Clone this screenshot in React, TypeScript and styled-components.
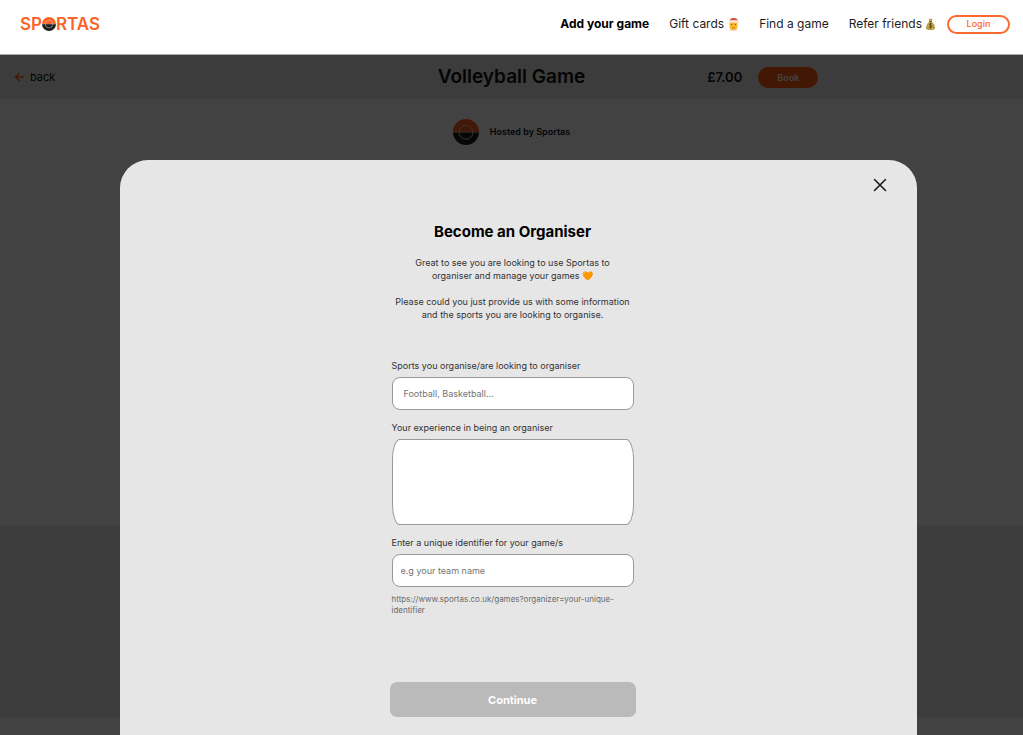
import React from "react";
import styled, { createGlobalStyle } from "styled-components";

const GlobalStyle = createGlobalStyle`
  *, *::before, *::after { box-sizing: border-box; }
  body { margin: 0; background: #fff; color: #111; font-family: Inter, "Liberation Sans", sans-serif; }
  button, input, textarea { font-family: inherit; }
  h1, h2, p { margin: 0; }
`;

const Page = styled.div`
  display: flex;
  flex-direction: column;
  min-height: 100vh;
`;

const Header = styled.header`
  display: flex;
  align-items: center;
  justify-content: space-between;
  height: 55px;
  padding: 0 13px 6px 20px;
  border-bottom: 1px solid #aaa;
`;

const Logo = styled.a`
  display: flex;
  align-items: center;
  color: #fc6427;
  font-size: 17px;
  font-weight: 600;
  line-height: 20px;
  text-decoration: none;
`;

const Nav = styled.nav`
  display: flex;
  align-items: center;
  gap: 20px;
`;

const NavLink = styled.a<{ $strong?: boolean }>`
  display: flex;
  align-items: center;
  gap: 4px;
  color: ${(p) => (p.$strong ? "#000" : "#1c1c1c")};
  font-size: 12px;
  font-weight: ${(p) => (p.$strong ? 700 : 400)};
  line-height: 20px;
  text-decoration: none;
  white-space: nowrap;
`;

const LoginButton = styled.button`
  width: 63px;
  height: 19px;
  margin-left: -8px;
  padding: 0;
  border: 2px solid #fc6a30;
  border-radius: 10px;
  background: #fff;
  color: #fc6427;
  font-size: 9px;
  font-weight: 500;
  line-height: 14px;
`;

const GamePage = styled.main`
  display: flex;
  flex: 1;
  flex-direction: column;
`;

const GameBar = styled.div`
  display: grid;
  grid-template-columns: 1fr auto 1fr;
  align-items: center;
  height: 44px;
  padding: 0 14px;
  background: #e8e8e8;
`;

const BackLink = styled.a`
  display: flex;
  align-items: center;
  gap: 5px;
  color: #111;
  font-size: 11px;
  text-decoration: none;
`;

const GameTitle = styled.h1`
  font-size: 19px;
  font-weight: 600;
  line-height: 24px;
`;

const Purchase = styled.div`
  display: flex;
  align-items: center;
  gap: 16px;
  padding-left: 122px;
  font-size: 13px;
  font-weight: 600;
`;

const BookButton = styled.button`
  width: 60px;
  height: 21px;
  padding: 0;
  border: 0;
  border-radius: 11px;
  background: #ff5a10;
  color: #fff;
  font-size: 9px;
  font-weight: 600;
`;

const Host = styled.div`
  display: flex;
  flex: 1;
  align-items: flex-start;
  justify-content: center;
  gap: 11px;
  padding-top: 20px;
  font-size: 9px;
  font-weight: 600;
  line-height: 26px;
`;

const GreyBand = styled.section`
  height: 192px;
  background: #e8e8e8;
`;

const PageFoot = styled.footer`
  height: 17px;
`;

const Overlay = styled.div`
  position: fixed;
  inset: 55px 0 0;
  overflow: hidden auto;
  padding: 105px 106px 0 120px;
  background: rgba(0, 0, 0, 0.74);
  scrollbar-width: none;
`;

const Dialog = styled.section`
  display: flex;
  flex-direction: column;
  align-items: center;
  min-height: 100%;
  padding: 15px 27px 18px 15px;
  border-radius: 28px 28px 0 0;
  background: #e6e6e6;
`;

const CloseButton = styled.button`
  display: flex;
  align-self: flex-end;
  padding: 0;
  border: 0;
  background: none;
`;

const DialogTitle = styled.h2`
  margin-top: 25px;
  color: #000;
  font-size: 15px;
  font-weight: 700;
  line-height: 24px;
`;

const Intro = styled.div`
  display: flex;
  flex-direction: column;
  gap: 13px;
  margin-top: 12px;
  color: #333;
  font-size: 9px;
  line-height: 13px;
  text-align: center;
`;

const Form = styled.form`
  display: flex;
  flex-direction: column;
  align-items: center;
  gap: 66px;
  width: 100%;
  max-width: 246px;
  margin-top: 38px;
`;

const Fields = styled.div`
  display: flex;
  flex-direction: column;
  gap: 11px;
  width: 100%;
  padding: 0 2px;
`;

const Field = styled.div`
  display: flex;
  flex-direction: column;
`;

const Label = styled.label`
  margin-bottom: 5px;
  color: #333;
  font-size: 9px;
  line-height: 13px;
`;

const TextInput = styled.input<{ $inset: number }>`
  width: 100%;
  height: 33px;
  padding: 0 ${(p) => p.$inset}px;
  border: 1px solid #999;
  border-radius: 8px;
  background: #fff;
  font-size: 9px;
  &::placeholder { color: #757575; opacity: 1; }
`;

const TextArea = styled.textarea`
  display: block;
  width: 100%;
  height: 86px;
  padding: 8px;
  border: 1px solid #999;
  border-radius: 8px / 20px;
  background: #fff;
  font-size: 9px;
  resize: none;
`;

const Hint = styled.p`
  margin-top: 7px;
  color: #6b6b6b;
  font-size: 8px;
  line-height: 11px;
`;

const ContinueButton = styled.button`
  width: 100%;
  height: 35px;
  border: 0;
  border-radius: 7px;
  background: #bababa;
  color: #fff;
  font-size: 11px;
  font-weight: 700;
`;

const Ball = ({ size }: { size: number }) => (
  <svg width={size} height={size} viewBox="0 0 26 26" aria-hidden="true">
    <path d="M0 13a13 13 0 0 1 26 0z" fill="#ff6320" />
    <path d="M0 13a13 13 0 0 0 26 0z" fill="#1d1d1d" />
    <path d="M0 13.3h26" stroke="#bbb" strokeWidth=".7" />
    <circle cx="13" cy="13.2" r="7" fill="none" stroke="#d8c4bc" strokeWidth="1" />
  </svg>
);

const ClausFace = () => (
  <svg width="11" height="13" viewBox="0 0 22 26" role="img" aria-label="Claus">
    <path d="M3 24c0-3 3-4 8-4s8 1 8 4v2H3z" fill="#f0dede" />
    <rect x="3" y="5" width="16" height="19" rx="7.5" fill="#fbb62c" />
    <path d="M3 6C4 1 8 0 12 0c5 0 8 3 8 8l-2-1z" fill="#e0493c" />
    <rect x="1" y="4.5" width="19" height="4.5" rx="2.2" fill="#f4eeee" />
    <circle cx="20" cy="9" r="2" fill="#eee4e4" />
    <circle cx="7.5" cy="13" r="1.2" fill="#6b4312" />
    <circle cx="14.5" cy="13" r="1.2" fill="#6b4312" />
    <path d="M7.5 18.5c2 2 5 2 7 0" fill="none" stroke="#a86b16" strokeWidth="1.4" />
  </svg>
);

const MoneyBag = () => (
  <svg width="9" height="12" viewBox="0 0 18 24" role="img" aria-label="Money bag">
    <path d="M5 1l3 1 2-1 3 1-2 5c4 3 7 8 7 12 0 4-2 5-9 5s-9-1-9-5c0-4 3-9 7-12z" fill="#c2a04c" />
    <path d="M6 7h6" stroke="#75551e" strokeWidth="1.8" />
    <path d="M12 12c-1-1-5-1.500-5 1s5 1.500 5 4-4 2-6 .8M9 10v11" fill="none" stroke="#4b3b18" strokeWidth="1.6" />
  </svg>
);

export default function App() {
  return (
    <>
      <GlobalStyle />
      <Page>
        <Header>
          <Logo href="#" aria-label="Sportas">
            <span>SP</span>
            <Ball size={14} />
            <span>RTAS</span>
          </Logo>
          <Nav>
            <NavLink href="#" $strong>Add your game</NavLink>
            <NavLink href="#">Gift cards <ClausFace /></NavLink>
            <NavLink href="#">Find a game</NavLink>
            <NavLink href="#">Refer friends <MoneyBag /></NavLink>
            <LoginButton type="button">Login</LoginButton>
          </Nav>
        </Header>
        <GamePage>
          <GameBar>
            <BackLink href="#">
              <svg width="11" height="10" viewBox="0 0 11 10" fill="none" stroke="#ff5a10" strokeWidth="1.3" aria-hidden="true">
                <path d="M10 5H1.5M5.5 1l-4 4 4 4" />
              </svg>
              back
            </BackLink>
            <GameTitle>Volleyball Game</GameTitle>
            <Purchase>
              <span>£7.00</span>
              <BookButton type="button">Book</BookButton>
            </Purchase>
          </GameBar>
          <Host>
            <Ball size={26} />
            <span>Hosted by Sportas</span>
          </Host>
          <GreyBand />
          <PageFoot />
        </GamePage>
      </Page>
      <Overlay>
        <Dialog role="dialog" aria-labelledby="dialog-title">
          <CloseButton type="button" aria-label="Close">
            <svg width="20" height="20" viewBox="0 0 20 20" fill="none" stroke="#161618" strokeWidth="1.5" strokeLinecap="round">
              <path d="M4.5 4.5l11 11M15.5 4.5l-11 11" />
            </svg>
          </CloseButton>
          <DialogTitle id="dialog-title">Become an Organiser</DialogTitle>
          <Intro>
            <p>Great to see you are looking to use Sportas to<br />organiser and manage your games 🧡</p>
            <p>Please could you just provide us with some information<br />and the sports you are looking to organise.</p>
          </Intro>
          <Form>
            <Fields>
              <Field>
                <Label htmlFor="sports">Sports you organise/are looking to organiser</Label>
                <TextInput id="sports" $inset={11} placeholder="Football, Basketball..." />
              </Field>
              <Field>
                <Label htmlFor="experience">Your experience in being an organiser</Label>
                <TextArea id="experience" />
              </Field>
              <Field>
                <Label htmlFor="identifier">Enter a unique identifier for your game/s</Label>
                <TextInput id="identifier" $inset={8} placeholder="e.g your team name" />
                <Hint>https://www.sportas.co.uk/games?organizer=your-unique-<br />identifier</Hint>
              </Field>
            </Fields>
            <ContinueButton type="button">Continue</ContinueButton>
          </Form>
        </Dialog>
      </Overlay>
    </>
  );
}
